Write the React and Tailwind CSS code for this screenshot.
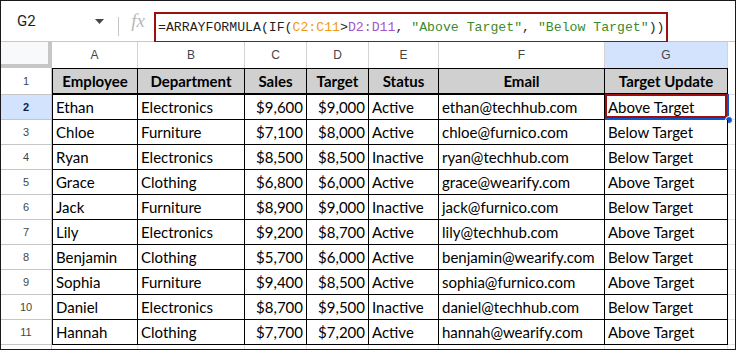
import React from "react";

const data = [
  ["Ethan", "Electronics", "$9,600", "$9,000", "Active", "ethan@techhub.com", "Above Target"],
  ["Chloe", "Furniture", "$7,100", "$8,000", "Active", "chloe@furnico.com", "Below Target"],
  ["Ryan", "Electronics", "$8,500", "$8,500", "Inactive", "ryan@techhub.com", "Below Target"],
  ["Grace", "Clothing", "$6,800", "$6,000", "Active", "grace@wearify.com", "Above Target"],
  ["Jack", "Furniture", "$8,900", "$9,000", "Inactive", "jack@furnico.com", "Below Target"],
  ["Lily", "Electronics", "$9,200", "$8,700", "Active", "lily@techhub.com", "Above Target"],
  ["Benjamin", "Clothing", "$5,700", "$6,000", "Active", "benjamin@wearify.com", "Below Target"],
  ["Sophia", "Furniture", "$9,400", "$8,500", "Active", "sophia@furnico.com", "Above Target"],
  ["Daniel", "Electronics", "$8,700", "$9,500", "Inactive", "daniel@techhub.com", "Below Target"],
  ["Hannah", "Clothing", "$7,700", "$7,200", "Active", "hannah@wearify.com", "Above Target"],
];

const headers = ["Employee", "Department", "Sales", "Target", "Status", "Email", "Target Update"];
const letters = ["A", "B", "C", "D", "E", "F", "G"];
const GRID = "grid grid-cols-[51px_86px_107px_62px_62px_70px_166px_123px_1fr]";
const cellFont = { fontFamily: "Lato, 'Open Sans', sans-serif" };

export default function App() {
  return (
    <div className="w-[737px] h-[351px] bg-white">
      <div className="w-[736px] h-[350px] border border-[#1a1a1a] bg-white overflow-hidden flex flex-col">
        {/* Formula bar */}
        <div className="h-[41px] shrink-0 flex items-start border-b border-[#c7c7c7] bg-white">
          <div className="w-[117px] h-[40px] flex items-center justify-between pl-[16px] pr-[14px]">
            <span className="text-[15px] text-[#1f1f1f]" style={{ fontFamily: "Roboto, 'Liberation Sans', sans-serif" }}>G2</span>
            <svg width="9" height="5" viewBox="0 0 9 5"><path d="M0 0h9L4.5 5z" fill="#444746" /></svg>
          </div>
          <div className="w-px h-[19px] bg-[#c4c7c5] mt-[16px]" />
          <div className="w-[35px] h-[40px] flex items-center justify-center pl-[3px]">
            <span className="text-[19px] italic text-[#b8b8b8]" style={{ fontFamily: "'Liberation Serif', serif" }}>fx</span>
          </div>
          <div className="mt-[11px] w-[514px] h-[31px] border-2 border-[#9c0f0f] flex items-center pl-[2px] text-[13.2px] whitespace-nowrap" style={{ fontFamily: "'Liberation Mono', monospace" }}>
            <span className="text-[#1f1f1f]">=ARRAYFORMULA(IF(</span>
            <span className="text-[#f09a1a]">C2:C11</span>
            <span className="text-[#1f1f1f]">&gt;</span>
            <span className="text-[#a356c9]">D2:D11</span>
            <span className="text-[#1f1f1f] whitespace-pre">, </span>
            <span className="text-[#3d8a2e]">"Above Target"</span>
            <span className="text-[#1f1f1f] whitespace-pre">, </span>
            <span className="text-[#3d8a2e]">"Below Target"</span>
            <span className="text-[#1f1f1f]">))</span>
          </div>
        </div>

        {/* Column headers */}
        <div className={`${GRID} h-[26px] shrink-0 text-[12px] text-[#444746]`} style={{ fontFamily: "'Liberation Sans', Arial, sans-serif" }}>
          <div className="bg-[#f8f9fa] border-r-4 border-b-4 border-[#c4c7c5]" />
          {letters.map((l, i) => (
            <div key={l} className={`flex items-center justify-center border-r border-[#d3d3d3] ${i === 6 ? "bg-[#d3e3fd]" : "bg-white"}`}>
              {l}
            </div>
          ))}
          <div className="bg-white" />
        </div>

        {/* Row 1 header */}
        <div className={`${GRID} h-[27px] shrink-0`}>
          <div className="flex items-center justify-center bg-white border-r border-b border-[#c4c7c5] text-[11px] text-[#444746]" style={{ fontFamily: "'Liberation Sans', Arial, sans-serif" }}>1</div>
          {headers.map((h, i) => (
            <div key={h} className={`flex items-center justify-center bg-[#d0d0d0] border-t border-r border-b-2 border-black text-[15px] font-bold text-black ${i === 0 ? "border-l" : ""}`} style={cellFont}>
              {h}
            </div>
          ))}
          <div className="border-b border-[#e1e1e1]" />
        </div>

        {/* Data rows */}
        {data.map((row, r) => (
          <div key={r} className={`${GRID} h-[25px] shrink-0 relative`}>
            <div
              className={`flex items-center justify-center border-r border-b border-[#c4c7c5] text-[11px] ${r === 0 ? "bg-[#d3e3fd] text-[#0b1f4d] font-bold" : "bg-white text-[#444746]"}`}
              style={{ fontFamily: "'Liberation Sans', Arial, sans-serif" }}
            >
              {r + 2}
            </div>
            {row.map((v, i) => (
              <div
                key={i}
                className={`flex items-center border-r border-b border-black text-[15px] text-black bg-white whitespace-nowrap overflow-hidden ${i === 0 ? "border-l" : ""} ${i === 2 || i === 3 ? "justify-end pr-[3px]" : "pl-[3px]"}`}
                style={cellFont}
              >
                {v}
              </div>
            ))}
            <div className="border-b border-[#e1e1e1]" />
            {r === 0 && (
              <>
                <div className="absolute left-[604px] top-[-1px] w-[124px] h-[26px] border-2 border-[#0b57d0] pointer-events-none" />
                <div className="absolute left-[604px] top-[-1px] w-[122px] h-[24px] border-2 border-[#9c0f0f] pointer-events-none" />
                <div className="absolute left-[724px] top-[21px] w-[8px] h-[8px] rounded-full bg-[#0b57d0] border border-white" />
              </>
            )}
          </div>
        ))}

        {/* trailing strip */}
        <div className={`${GRID} flex-1`}>
          <div className="bg-white border-r border-[#c4c7c5]" />
          {letters.map((l) => (
            <div key={l} className="border-r border-[#e1e1e1]" />
          ))}
          <div />
        </div>
      </div>
    </div>
  );
}
